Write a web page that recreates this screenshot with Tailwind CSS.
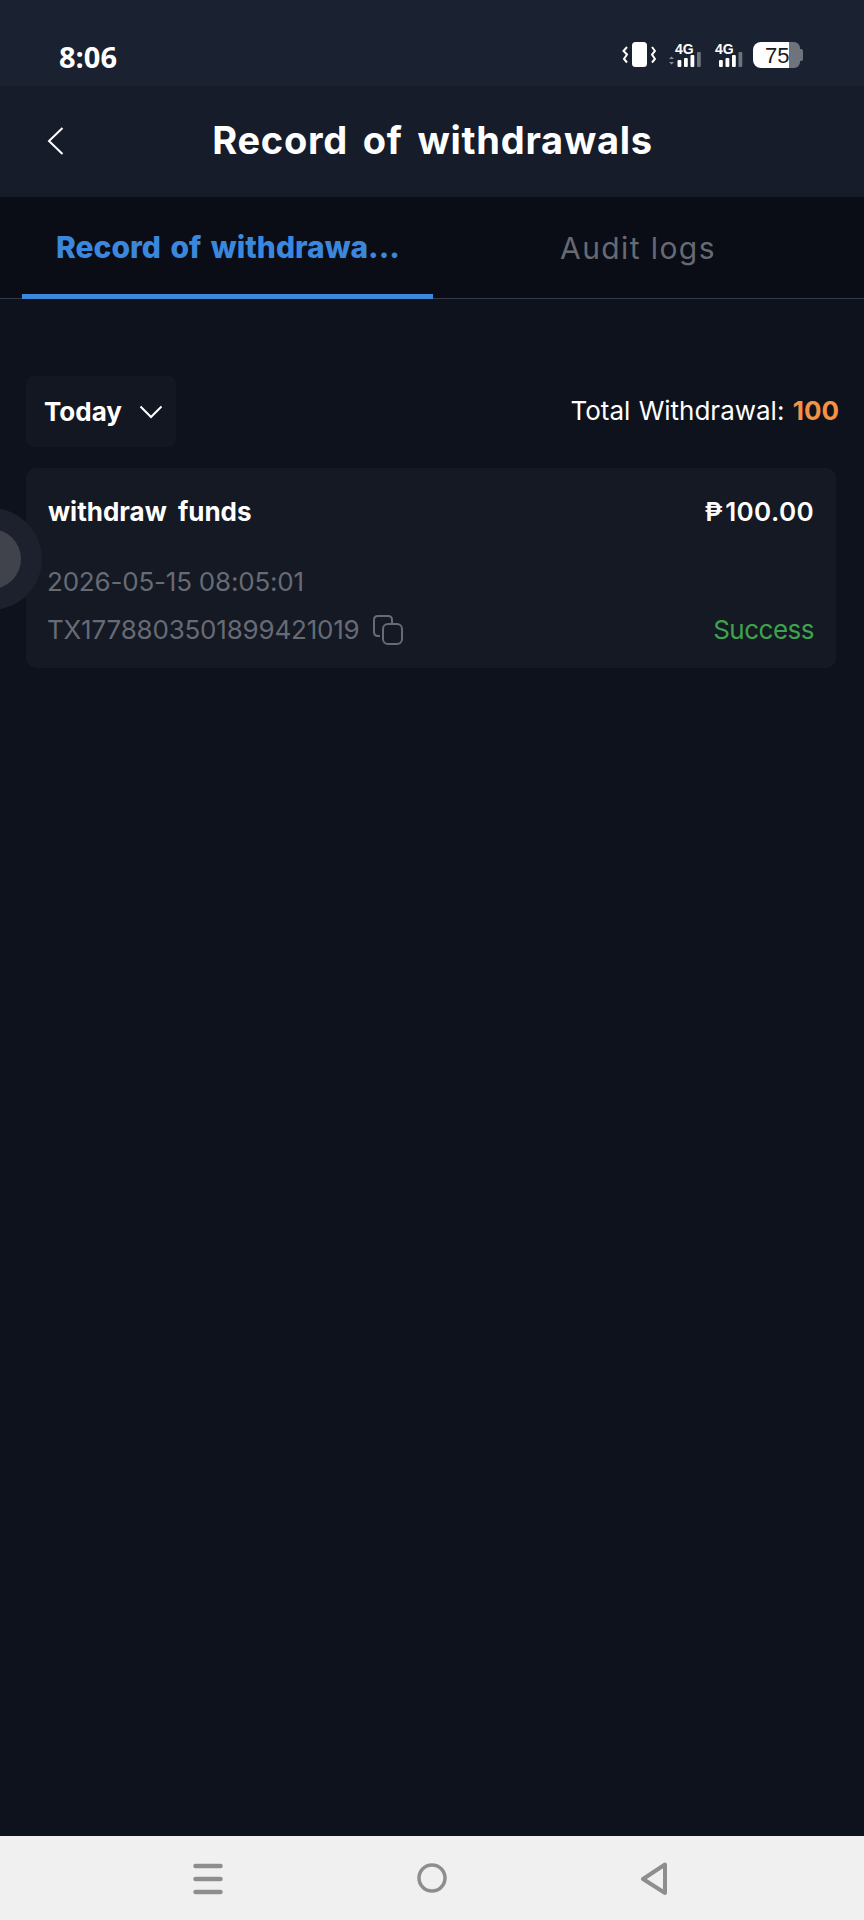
<!DOCTYPE html>
<html lang="en">
<head>
  <meta charset="UTF-8">
  <meta name="viewport" content="width=device-width, initial-scale=1.0">
  <title>Record of withdrawals</title>
  <script src="https://cdn.jsdelivr.net/npm/@tailwindcss/browser@4"></script>
</head>
<body class="bg-[#0e121c] font-['Inter',sans-serif] text-white">
  <div class="relative w-[864px] h-[1920px] overflow-hidden flex flex-col">

    <!-- Status bar -->
    <div class="h-[86px] shrink-0 bg-[#1a2131] flex items-start justify-between pl-[59px] pr-[61px] pt-[38px]">
      <span class="font-['Open_Sans',sans-serif] text-[29px] leading-[38px] font-bold">8:06</span>
      <div class="flex items-start mt-[4px]">
        <svg width="34" height="26" viewBox="0 0 34 26" class="mr-[12px]">
          <rect x="10" y="0" width="15" height="25" rx="3.5" fill="#fff"/>
          <path d="M5 5 L1.5 9 L5 12.5 L2 17 L5 20.5 M30 5 L33 9 L30 12.5 L33 17 L30 20.5" fill="none" stroke="#fff" stroke-width="2"/>
        </svg>
        <div class="relative w-[36px] h-[26px] mr-[13px]">
          <span class="absolute left-[7px] top-0 font-['Liberation_Sans',sans-serif] text-[14px] leading-[14px] font-bold">4G</span>
          <svg width="36" height="26" viewBox="0 0 36 26" class="absolute left-0 top-0">
            <path d="M1 17l2.5-2.5 2.5 2.5zM1 20l2.5 2.5 2.5-2.5z" fill="#8a8e98"/>
            <rect x="9.500" y="18" width="3.800" height="7" rx="1" fill="#fff"/>
            <rect x="16" y="16" width="3.800" height="9" rx="1" fill="#fff"/>
            <rect x="22.500" y="13" width="3.800" height="12" rx="1" fill="#fff"/>
            <rect x="29" y="10" width="3.800" height="15" rx="1" fill="#6f737c"/>
          </svg>
        </div>
        <div class="relative w-[26px] h-[26px] mr-[10px]">
          <span class="absolute left-[-2px] top-0 font-['Liberation_Sans',sans-serif] text-[14px] leading-[14px] font-bold">4G</span>
          <svg width="26" height="26" viewBox="0 0 26 26" class="absolute left-0 top-0">
            <rect x="2" y="18" width="3.800" height="7" rx="1" fill="#fff"/>
            <rect x="8.500" y="16" width="3.800" height="9" rx="1" fill="#fff"/>
            <rect x="15" y="13" width="3.800" height="12" rx="1" fill="#fff"/>
            <rect x="21.500" y="10" width="3.800" height="15" rx="1" fill="#6f737c"/>
          </svg>
        </div>
        <div class="relative w-[50px] h-[26px]">
          <div class="w-[36px] h-[26px] bg-white rounded-l-[8px]"></div>
          <div class="absolute left-[36px] top-0 w-[11px] h-[26px] bg-[#6f737c] rounded-r-[6px]"></div>
          <div class="absolute left-[47px] top-[7px] w-[3px] h-[12px] bg-[#6f737c] rounded-r-[2px]"></div>
          <span class="absolute left-[12px] top-0 font-['Liberation_Sans',sans-serif] text-[#1a1a1a] text-[22px] leading-[27px]">75</span>
        </div>
      </div>
    </div>

    <!-- Header -->
    <div class="relative h-[111px] shrink-0 bg-[#161c2a] flex items-center justify-center">
      <svg width="18" height="30" viewBox="0 0 18 30" class="absolute left-[47px] top-[40px]">
        <path d="M15.5 2 L2 15 L15.5 28" fill="none" stroke="#fff" stroke-width="2"/>
      </svg>
      <h1 class="text-[38px] leading-[48px] font-bold -mt-[4px] ml-[1px] tracking-[0.75px] [word-spacing:5px]">Record of withdrawals</h1>
    </div>

    <!-- Tabs -->
    <div class="h-[102px] shrink-0 bg-[#0a0d16] flex pl-[22px] border-b border-[#343a46]">
      <div class="w-[411px] h-[102px] shrink-0 border-b-[5px] border-[#3b87dd] flex items-center pl-[34px] pt-[2px]">
        <span class="text-[#3b87dd] text-[30px] leading-[40px] font-extrabold [word-spacing:3px]">Record of withdrawa...</span>
      </div>
      <div class="flex-1 flex items-center justify-center pr-[21px]">
        <span class="text-[#666a73] text-[30px] leading-[40px] tracking-[1.4px]">Audit logs</span>
      </div>
    </div>

    <!-- Filter row -->
    <div class="mt-[77px] pl-[26px] pr-[25px] flex items-center justify-between">
      <div class="w-[150px] h-[71px] bg-[#121722] rounded-[8px] flex items-center pl-[18px]">
        <span class="text-[26px] leading-[36px] font-bold">Today</span>
        <svg width="24" height="14" viewBox="0 0 24 14" class="ml-[17px]">
          <path d="M1.5 1.5 L12 12 L22.5 1.5" fill="none" stroke="#fff" stroke-width="2"/>
        </svg>
      </div>
      <div class="text-[26px] leading-[36px] -mt-[2px] [word-spacing:1px]">Total Withdrawal: <span class="text-[#f59145] font-bold">100</span></div>
    </div>

    <!-- Record card -->
    <div class="mt-[21px] mx-[26px] w-[810px] h-[200px] bg-[#141924] rounded-[10px] px-[22px] pt-[26px] flex flex-col">
      <div class="flex items-center justify-between h-[36px]">
        <span class="text-[26px] leading-[36px] font-bold [word-spacing:5px]">withdraw funds</span>
        <span class="text-[26px] leading-[36px] font-semibold tracking-[0.4px]"><span class="mr-[2px]">₱</span>100.00</span>
      </div>
      <div class="mt-[34px] -ml-[1px] text-[#676b74] text-[26px] leading-[36px] tracking-[-0.2px]">2026-05-15 08:05:01</div>
      <div class="mt-[12px] flex items-center justify-between h-[36px]">
        <div class="flex items-center -ml-[1px]">
          <span class="text-[#676b74] text-[26px] leading-[36px] tracking-[-0.2px]">TX1778803501899421019</span>
          <svg width="32" height="32" viewBox="0 0 32 32" class="ml-[12px]">
            <path d="M8 22 H6 Q2 22 2 18 V6 Q2 2 6 2 H16 Q20 2 20 6 V9" fill="none" stroke="#676b74" stroke-width="2"/>
            <rect x="11" y="10" width="19" height="20" rx="5" fill="none" stroke="#676b74" stroke-width="2"/>
          </svg>
        </div>
        <span class="text-[#3fa34d] text-[26px] leading-[36px] tracking-[-0.5px]">Success</span>
      </div>
    </div>

    <!-- Floating button pinned over the left edge -->
    <div class="absolute left-[-60px] top-[508px] w-[102px] h-[102px] rounded-full bg-[#1c212d] flex items-center justify-center">
      <div class="w-[60px] h-[60px] rounded-full bg-[#40434c]"></div>
    </div>

    <!-- Navigation bar -->
    <div class="mt-auto h-[84px] shrink-0 bg-[#f0f0f0] flex items-start pt-[27px] pl-[193px]">
      <svg width="30" height="32" viewBox="0 0 30 32">
        <path d="M2.500 3 H27.500 M2.500 16 H27.500 M2.500 29 H27.500" fill="none" stroke="#8e8e8e" stroke-width="4.500" stroke-linecap="round"/>
      </svg>
      <svg width="30" height="30" viewBox="0 0 30 30" class="ml-[194px]">
        <circle cx="15" cy="15" r="13" fill="none" stroke="#8e8e8e" stroke-width="3.500"/>
      </svg>
      <svg width="28" height="34" viewBox="0 0 28 34" class="ml-[193px] -mt-[1px]">
        <path d="M25 2.500 V31 L3 17 Z" fill="none" stroke="#8e8e8e" stroke-width="4" stroke-linejoin="round"/>
      </svg>
    </div>
  </div>
</body>
</html>
